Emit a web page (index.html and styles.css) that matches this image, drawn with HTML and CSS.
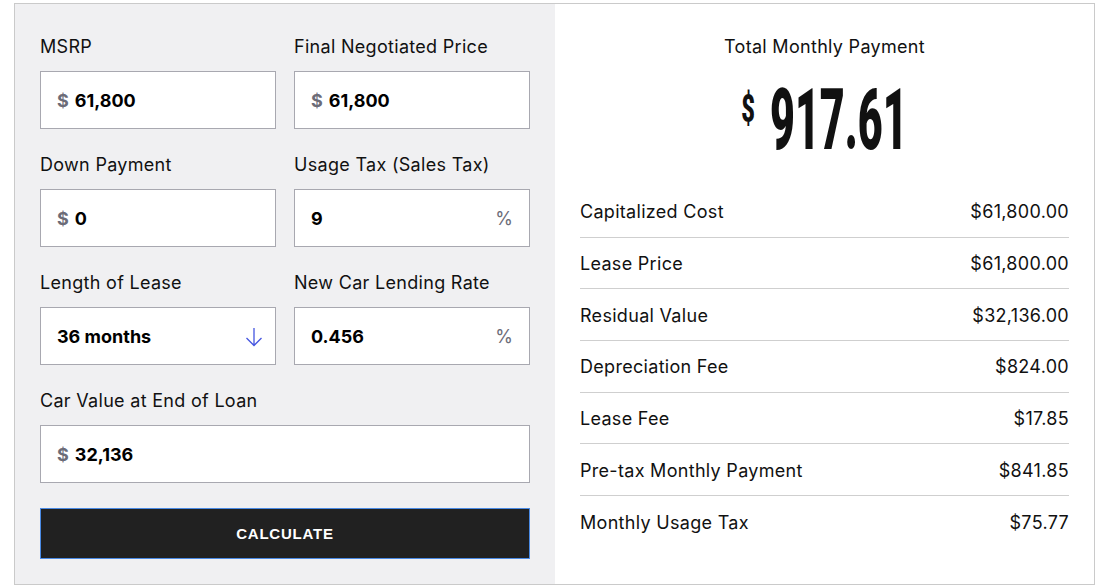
FILE: index.html
```html
<!DOCTYPE html>
<html>
<head>
<meta charset="utf-8">
<link rel="stylesheet" href="styles.css">
</head>
<body>
<div class="calc">
  <div class="form">
    <div class="grid">
      <div class="field">
        <div class="label">MSRP</div>
        <div class="input"><span class="cur">$</span><span class="val">61,800</span></div>
      </div>
      <div class="field">
        <div class="label">Final Negotiated Price</div>
        <div class="input"><span class="cur">$</span><span class="val">61,800</span></div>
      </div>
      <div class="field">
        <div class="label">Down Payment</div>
        <div class="input"><span class="cur">$</span><span class="val">0</span></div>
      </div>
      <div class="field">
        <div class="label">Usage Tax (Sales Tax)</div>
        <div class="input"><span class="val">9</span><span class="pct">%</span></div>
      </div>
      <div class="field">
        <div class="label">Length of Lease</div>
        <div class="input"><span class="val">36 months</span>
          <svg class="arrow" width="18" height="20" viewBox="0 0 18 20"><path d="M9 1 V18.5 M1.5 11 L9 18.5 L16.5 11" fill="none" stroke="#4656e0" stroke-width="1.3"/></svg>
        </div>
      </div>
      <div class="field">
        <div class="label">New Car Lending Rate</div>
        <div class="input"><span class="val">0.456</span><span class="pct">%</span></div>
      </div>
      <div class="field wide">
        <div class="label">Car Value at End of Loan</div>
        <div class="input"><span class="cur">$</span><span class="val">32,136</span></div>
      </div>
    </div>
    <button class="btn">CALCULATE</button>
  </div>
  <div class="result">
    <div class="title">Total Monthly Payment</div>
    <div class="total"><span class="dollar">$</span><span class="amount">917.61</span></div>
    <div class="rows">
      <div class="row"><span>Capitalized Cost</span><span>$61,800.00</span></div>
      <div class="row"><span>Lease Price</span><span>$61,800.00</span></div>
      <div class="row"><span>Residual Value</span><span>$32,136.00</span></div>
      <div class="row"><span>Depreciation Fee</span><span>$824.00</span></div>
      <div class="row"><span>Lease Fee</span><span>$17.85</span></div>
      <div class="row"><span>Pre-tax Monthly Payment</span><span>$841.85</span></div>
      <div class="row"><span>Monthly Usage Tax</span><span>$75.77</span></div>
    </div>
  </div>
</div>
</body>
</html>
```
FILE: styles.css
```css
* { box-sizing: border-box; }
body {
  margin: 3px 0 0 14px;
  font-family: Inter, Lato, sans-serif;
  color: #111;
  background: #fff;
  letter-spacing: 0.3px;
}
.calc {
  width: 1081px;
  height: 582px;
  border: 1px solid #cacaca;
  display: flex;
}
.form {
  width: 540px;
  background: #f0f0f2;
  padding: 30px 25px 0 25px;
}
.grid {
  display: grid;
  grid-template-columns: 236px 236px;
  column-gap: 18px;
}
.field { margin-bottom: 23px; }
.field.wide { grid-column: 1 / 3; margin-bottom: 25px; }
.label {
  font-size: 18px;
  line-height: 25px;
  height: 24px;
  margin-bottom: 13px;
  color: #111;
}
.input {
  height: 58px;
  background: #fff;
  border: 1px solid #a8a8b0;
  display: flex;
  align-items: center;
  padding: 1px 16px 0 16px;
  font-size: 18px;
  font-weight: 700;
  letter-spacing: 0;
}
.cur { color: #6c6c78; margin-right: 6px; }
.val { flex: 1; color: #000; }
.pct { color: #6c6c78; font-weight: 400; font-size: 18px; }
.arrow { margin-right: -4px; }
.btn {
  display: block;
  width: 490px;
  height: 51px;
  background: #212121;
  border: 1px solid #4a8ae4;
  color: #fff;
  font-family: "Liberation Sans", Arial, sans-serif;
  font-weight: 700;
  font-size: 15px;
  letter-spacing: 0.8px;
  padding: 0;
}
.result {
  flex: 1;
  padding: 30px 25px 0 25px;
}
.title {
  text-align: center;
  font-size: 18px;
  line-height: 25px;
  height: 24px;
}
.total {
  display: flex;
  justify-content: center;
  align-items: flex-start;
  height: 128px;
  padding-top: 19px;
  padding-right: 6px;
  letter-spacing: 0;
}
.dollar {
  font-family: Roboto, sans-serif;
  font-weight: 900;
  font-size: 38px;
  line-height: 40px;
  margin-top: 12px;
  margin-right: 10px;
  display: inline-block;
  transform: scaleX(0.62);
}
.amount {
  font-family: Roboto, sans-serif;
  font-weight: 900;
  font-size: 86px;
  line-height: 86px;
  display: inline-block;
  width: 136px;
  white-space: nowrap;
  transform: scaleX(0.5);
  transform-origin: left center;
}
.row {
  display: flex;
  justify-content: space-between;
  align-items: center;
  height: 51.67px;
  padding-top: 1px;
  border-bottom: 1px solid #cfcfcf;
  font-size: 18px;
}
.row:last-child { border-bottom: none; }
```
